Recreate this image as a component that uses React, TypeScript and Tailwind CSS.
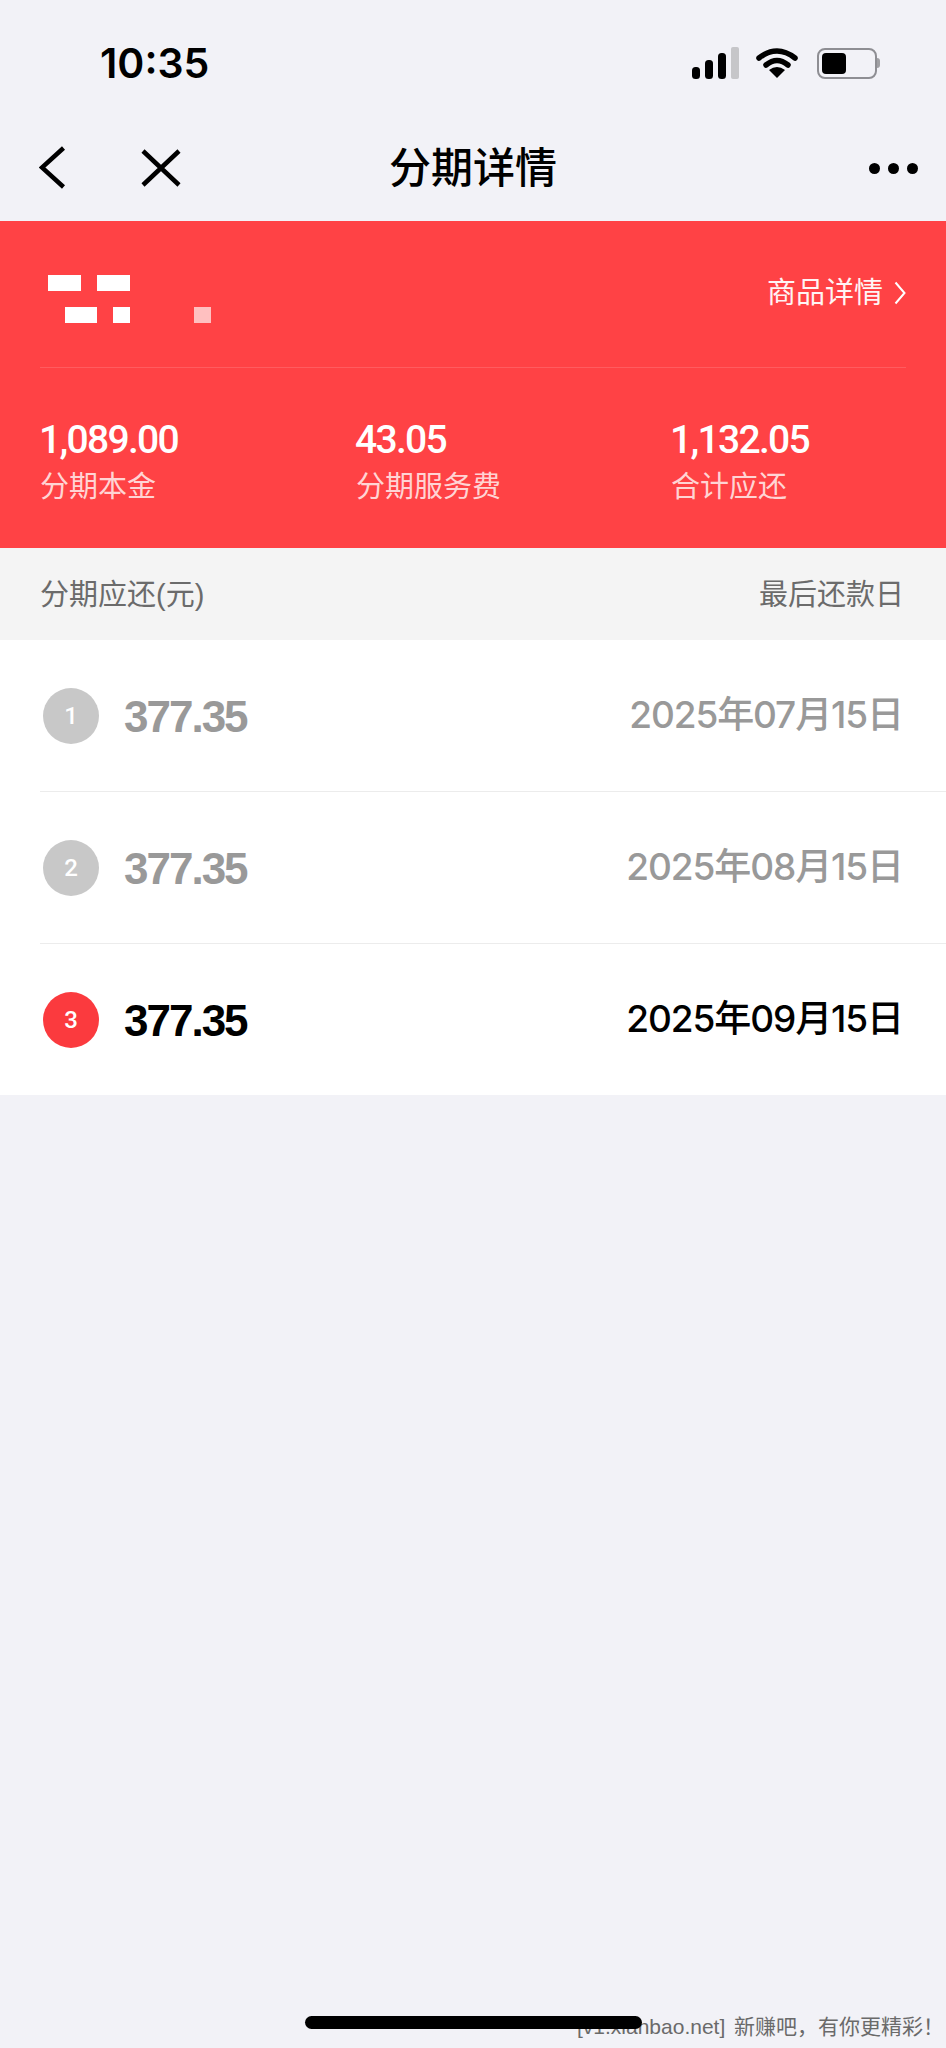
import React from "react";

const sans = "font-['Liberation_Sans','Noto_Sans_CJK_SC',sans-serif]";

const rows = [
  { n: 1, amount: "377.35", date: "2025年07月15日", done: true },
  { n: 2, amount: "377.35", date: "2025年08月15日", done: true },
  { n: 3, amount: "377.35", date: "2025年09月15日", done: false },
];

const stats = [
  { value: "1,089.00", label: "分期本金" },
  { value: "43.05", label: "分期服务费" },
  { value: "1,132.05", label: "合计应还" },
];

function StatusIcons() {
  return (
    <div className="flex items-center">
      {/* signal */}
      <svg width="47" height="32" viewBox="0 0 47 32" className="mr-[17px]">
        <rect x="0" y="20" width="8" height="12" rx="3.5" fill="#000" />
        <rect x="13" y="13" width="8" height="19" rx="3.5" fill="#000" />
        <rect x="26" y="6" width="8" height="26" rx="3.5" fill="#000" />
        <rect x="39" y="0" width="8" height="32" rx="2" fill="#c6c6c9" />
      </svg>
      {/* wifi */}
      <svg width="42" height="32" viewBox="0 0 42 32" className="mr-[19px]">
        <path d="M3 11 Q21 -3 39 11" fill="none" stroke="#000" strokeWidth="5.5" strokeLinecap="round" />
        <path d="M10 18 Q21 9 32 18" fill="none" stroke="#000" strokeWidth="5.5" strokeLinecap="round" />
        <path d="M21 31 L13 23 Q21 17 29 23 Z" fill="#000" />
      </svg>
      {/* battery */}
      <div className="flex items-center">
        <div className="w-[60px] h-[31px] rounded-[8px] border-2 border-[#8e8e93] p-[3px] flex">
          <div className="w-[24px] h-full rounded-[4px] bg-black" />
        </div>
        <div className="w-[3px] h-[10px] rounded-r-full bg-[#a0a0a4]" />
      </div>
    </div>
  );
}

export default function App() {
  return (
    <div className={`relative w-[946px] h-[2048px] overflow-hidden bg-[#f2f2f7] ${sans}`}>
      {/* Status bar */}
      <div className="h-[110px] pt-[41px] pl-[100px] pr-[66px] flex items-start justify-between">
        <span className="font-['Inter',sans-serif] text-[41px] leading-[44px] font-semibold text-black">10:35</span>
        <div className="pt-[6px]">
          <StatusIcons />
        </div>
      </div>

      {/* Nav bar */}
      <div className="h-[111px] flex items-center px-[39px] relative">
        <svg width="27" height="43" viewBox="0 0 27 43" className="mb-[-4px]">
          <path d="M24.5 2 L3 21.5 L24.5 41" fill="none" stroke="#000" strokeWidth="4.5" />
        </svg>
        <svg width="40" height="38" viewBox="0 0 40 38" className="ml-[75px] mb-[-4px]">
          <path d="M2 2 L38 36 M38 2 L2 36" fill="none" stroke="#000" strokeWidth="4.5" />
        </svg>
        <span className="ml-[208px] mb-[-6px] text-[42px] leading-[48px] font-medium text-black">分期详情</span>
        <div className="ml-auto mr-[-11px] mb-[-6px] flex gap-[8px]">
          <div className="w-[11px] h-[11px] rounded-full bg-black" />
          <div className="w-[11px] h-[11px] rounded-full bg-black" />
          <div className="w-[11px] h-[11px] rounded-full bg-black" />
        </div>
      </div>

      {/* Red summary */}
      <div className="h-[327px] bg-[#ff4245] text-white">
        <div className="mx-[40px] h-[147px] border-b border-[#ff5c5f] flex justify-between">
          {/* redacted merchant name */}
          <svg width="171" height="48" viewBox="0 0 171 48" className="mt-[54px] ml-[8px]">
            <rect x="0" y="0" width="33" height="16" fill="#fff" />
            <rect x="49" y="0" width="33" height="16" fill="#fff" />
            <rect x="17" y="32" width="32" height="16" fill="#fff" />
            <rect x="65" y="32" width="17" height="16" fill="#fff" />
            <rect x="146" y="32" width="17" height="16" fill="#ffc0c0" />
          </svg>
          <div className="mt-[54px] flex items-start h-[36px] text-[29px] leading-[36px] text-[#fff4f4]">
            <span>商品详情</span>
            <svg width="12" height="24" viewBox="0 0 12 24" className="ml-[11px] mt-[6px]">
              <path d="M1.5 1.5 L10.5 12 L1.5 22.5" fill="none" stroke="#fff" strokeWidth="2" />
            </svg>
          </div>
        </div>
        <div className="grid grid-cols-[316px_315px_1fr] pl-[39px] pt-[50px]">
          {stats.map((s) => (
            <div key={s.label} className="flex flex-col">
              <span className="font-['Roboto',sans-serif] text-[39px] leading-[44px] font-medium tracking-[-1.7px]">{s.value}</span>
              <span className="mt-[7px] ml-[1px] text-[29px] leading-[36px] text-[#ffd4d4]">{s.label}</span>
            </div>
          ))}
        </div>
      </div>

      {/* List header */}
      <div className="h-[92px] bg-[#f4f4f4] pl-[40px] pr-[42px] pt-[2px] flex items-center justify-between text-[29px] leading-[36px] text-[#6b6b6b]">
        <span>分期应还(元)</span>
        <span>最后还款日</span>
      </div>

      {/* Installments */}
      <div className="bg-white">
        {rows.map((r, i) => (
          <div key={r.n} className="pl-[43px]">
            <div className="h-[151px] flex items-center pr-[43px]">
              <div
                className={`font-['Roboto',sans-serif] w-[56px] h-[56px] rounded-full flex items-center justify-center text-[24px] font-medium text-white ${
                  r.done ? "bg-[#c8c8c8]" : "bg-[#fb3a3e]"
                }`}
              >
                {r.n}
              </div>
              <span
                className={`ml-[25px] mt-[2px] text-[44px] leading-[52px] font-bold tracking-[-2px] ${
                  r.done ? "text-[#999999]" : "text-black"
                }`}
              >
                {r.amount}
              </span>
              <span
                className={`font-['Inter','Noto_Sans_CJK_SC',sans-serif] ml-auto mb-[1px] text-[37px] leading-[44px] font-medium tracking-[-1.1px] ${
                  r.done ? "text-[#999999]" : "text-black"
                }`}
              >
                {r.date}
              </span>
            </div>
            {i < rows.length - 1 && <div className="ml-[-3px] h-px bg-[#ececec]" />}
          </div>
        ))}
      </div>

      {/* Watermark, sits under the home indicator */}
      <span className="absolute left-[577px] top-[2013px] text-[21px] leading-[28px] text-[#6a6a6a] whitespace-nowrap [word-spacing:3px]">
        [v1.xianbao.net] 新赚吧，有你更精彩！
      </span>
      <div className="absolute left-[305px] top-[2016px] w-[337px] h-[13px] rounded-full bg-black" />
    </div>
  );
}
